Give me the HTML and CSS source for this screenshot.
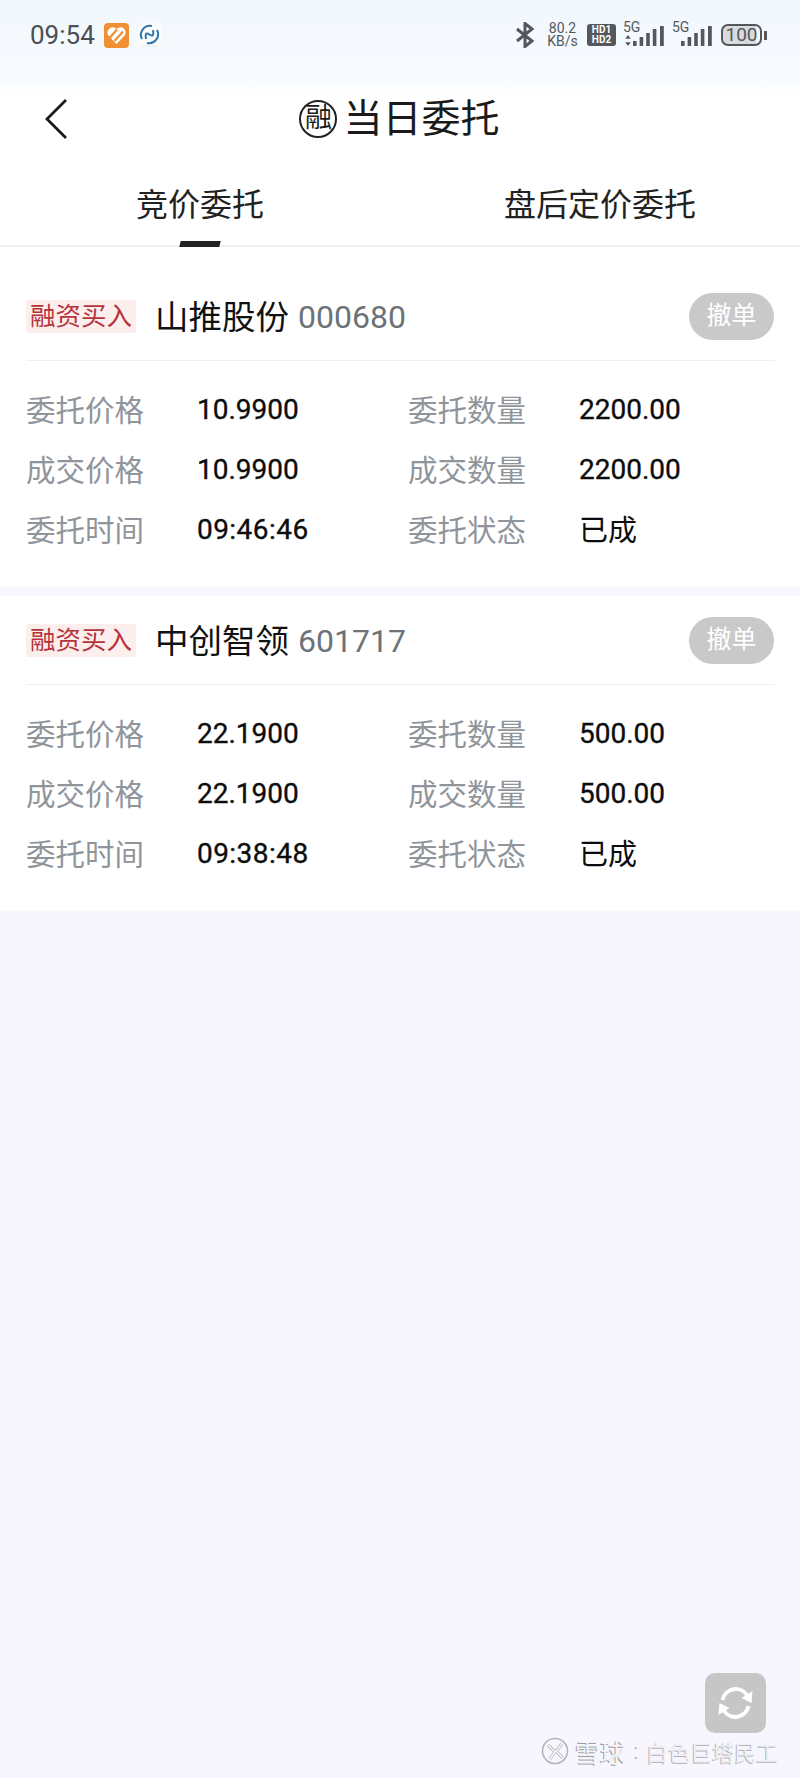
FILE: index.html
```html
<!DOCTYPE html>
<html lang="zh-CN">
<head>
<meta charset="utf-8">
<title>当日委托</title>
<link rel="stylesheet" href="styles.css">
</head>
<body>
<div class="page">
  <header class="top">
    <div class="status">
      <div class="status-left">
        <span class="clock">09:54</span>
        <svg class="app-icon" viewBox="0 0 25 25"><rect width="25" height="25" rx="4" fill="#f08f34"/><path d="M12.5 21 L4 12 Q2 7 7 4.500 Q10.500 3.500 12.500 6 Q15 3.500 18.500 4.500 Q23 7 21 12 Z" fill="#fff"/><path d="M6 14.500 L13 6.500 M10.500 18 L19 8.500" stroke="#f08f34" stroke-width="2.200" fill="none"/></svg>
        <svg class="app-icon light" viewBox="0 0 23 24"><rect width="23" height="24" rx="4" fill="#fbfcfe"/><rect x="3" y="22.500" width="17" height="1" fill="#dfe3e8"/><path d="M4 16 A9 9 0 0 1 14 3 M19 7 A9 9 0 0 1 9 20" fill="none" stroke="#2f76ad" stroke-width="2"/><path d="M8 16 Q6.500 8 11.500 11.500 Q16.500 15 15 7" fill="none" stroke="#2f76ad" stroke-width="2"/></svg>
      </div>
      <div class="status-right">
        <svg class="bt" viewBox="0 0 20 26"><path d="M2 7 L17 19 L10 24.500 V1.500 L17 7 L2 19" fill="none" stroke="#54585d" stroke-width="3"/></svg>
        <div class="speed"><span>80.2</span><span>KB/s</span></div>
        <div class="hd"><span>HD1</span><span>HD2</span></div>
        <div class="sig first">
          <span class="five-g">5G</span>
          <svg class="arrows" viewBox="0 0 6 12"><path d="M3 0 L6 4 H0 Z M3 12 L0 8 H6 Z" fill="#54585d"/></svg>
          <svg class="bars" viewBox="0 0 32 20"><g fill="#54585d"><rect x="0" y="15" width="3.600" height="5"/><rect x="6.600" y="11" width="3.600" height="9"/><rect x="13.200" y="7" width="3.600" height="13"/><rect x="19.800" y="3" width="3.600" height="17"/><rect x="27" y="0" width="3.800" height="20"/></g></svg>
        </div>
        <div class="sig">
          <span class="five-g">5G</span>
          <svg class="bars" viewBox="0 0 32 20"><g fill="#54585d"><rect x="0" y="15" width="3.600" height="5"/><rect x="6.600" y="11" width="3.600" height="9"/><rect x="13.200" y="7" width="3.600" height="13"/><rect x="19.800" y="3" width="3.600" height="17"/><rect x="27" y="0" width="3.800" height="20"/></g></svg>
        </div>
        <div class="battery"><div class="battery-body">100</div><i class="battery-cap"></i></div>
      </div>
    </div>
    <nav class="nav">
      <svg class="back" viewBox="0 0 24 42"><path d="M22 2 L3 21 L22 40" fill="none" stroke="#1a1a1a" stroke-width="2.800"/></svg>
      <h1 class="title"><span class="seal">融</span>当日委托</h1>
    </nav>
  </header>

  <div class="tabs">
    <div class="tab active">竞价委托</div>
    <div class="tab">盘后定价委托</div>
  </div>

  <div class="list">
    <section class="card">
      <div class="card-head">
        <span class="tag">融资买入</span>
        <span class="name">山推股份</span>
        <span class="code">000680</span>
        <span class="cancel">撤单</span>
      </div>
      <div class="grid">
        <span class="label">委托价格</span><span class="value">10.9900</span>
        <span class="label">委托数量</span><span class="value">2200.00</span>
        <span class="label">成交价格</span><span class="value">10.9900</span>
        <span class="label">成交数量</span><span class="value">2200.00</span>
        <span class="label">委托时间</span><span class="value time">09:46:46</span>
        <span class="label">委托状态</span><span class="value-text">已成</span>
      </div>
    </section>
    <section class="card">
      <div class="card-head">
        <span class="tag">融资买入</span>
        <span class="name">中创智领</span>
        <span class="code">601717</span>
        <span class="cancel">撤单</span>
      </div>
      <div class="grid">
        <span class="label">委托价格</span><span class="value">22.1900</span>
        <span class="label">委托数量</span><span class="value">500.00</span>
        <span class="label">成交价格</span><span class="value">22.1900</span>
        <span class="label">成交数量</span><span class="value">500.00</span>
        <span class="label">委托时间</span><span class="value time">09:38:48</span>
        <span class="label">委托状态</span><span class="value-text">已成</span>
      </div>
    </section>
  </div>

  <button class="refresh" type="button" aria-label="刷新">
    <svg viewBox="0 0 40 40"><g fill="none" stroke="#fff" stroke-width="4"><path d="M7 17 A13.500 13.500 0 0 1 32 13"/><path d="M33 23 A13.500 13.500 0 0 1 8 27"/></g><path d="M37 8 L36 20 L26 15 Z M3 32 L4 20 L14 25 Z" fill="#fff"/></svg>
  </button>

  <div class="watermark">
    <svg class="wm-logo" viewBox="0 0 28 28"><circle cx="14" cy="14" r="12.500" fill="#f7f6fe" stroke="#b4b4ba" stroke-width="1.600"/><path d="M7 8 L14 15 L9 22 M21 7 L15 14 L22 21" fill="none" stroke="#aeaeb4" stroke-width="3"/><path d="M7 8 L14 15 L9 22 M21 7 L15 14 L22 21" fill="none" stroke="#fff" stroke-width="1.400"/></svg>
    <span class="wm-brand">雪球</span><span class="wm-sep">:</span><span class="wm-user">白色巨塔民工</span>
  </div>
</div>
</body>
</html>
```

FILE: styles.css
```css
* { box-sizing: border-box; }
html, body { margin: 0; padding: 0; }
body {
  width: 800px;
  height: 1778px;
  overflow: hidden;
  background: #f7f6fe;
  font-family: Roboto, "Noto Sans CJK SC", sans-serif;
}
.page { position: relative; width: 800px; height: 1778px; }

.top { background: linear-gradient(#f1f7fd 0, #f8fbff 80px, #fff 94px); }
.status {
  height: 70px;
  display: flex;
  justify-content: space-between;
  align-items: center;
  padding: 0 33px 0 30px;
}
.status-left, .status-right { display: flex; align-items: center; }
.clock { font-size: 26px; color: #4b5056; margin-right: 9px; }
.app-icon { width: 25px; height: 25px; margin-right: 9px; }
.app-icon.light { width: 23px; height: 24px; }
.bt { width: 20px; height: 26px; margin-right: 13px; }
.speed {
  display: flex;
  flex-direction: column;
  align-items: center;
  width: 29px;
  font-size: 14px;
  line-height: 13px;
  color: #54585d;
  margin-right: 10px;
}
.hd {
  width: 29px;
  height: 22px;
  background: #54585d;
  border-radius: 3px;
  color: #fff;
  font-size: 10px;
  line-height: 10.5px;
  font-weight: 700;
  display: flex;
  flex-direction: column;
  align-items: center;
  justify-content: center;
  margin-right: 7px;
}
.sig { position: relative; width: 32px; height: 24px; margin-right: 8px; }
.sig.first { width: 42px; padding-left: 10px; margin-right: 16px; }
.five-g {
  position: absolute;
  left: -9px;
  top: -3px;
  font-size: 14px;
  line-height: 15px;
  color: #54585d;
}
.sig.first .five-g { left: 0; }
.arrows { position: absolute; left: 2px; top: 12px; width: 6px; height: 11px; }
.bars { display: block; width: 32px; height: 20px; margin-top: 3px; }
.battery { display: flex; align-items: center; }
.battery-body {
  width: 41px;
  height: 22px;
  border: 2px solid #54585d;
  border-radius: 7px;
  background: linear-gradient(90deg, #d8dadd 88%, transparent 88%);
  font-size: 19px;
  line-height: 18px;
  text-align: center;
  color: #54585d;
}
.battery-cap { width: 3px; height: 9px; background: #54585d; margin-left: 2px; }

.nav {
  position: relative;
  height: 96px;
  padding-top: 1px;
  display: flex;
  justify-content: center;
  align-items: center;
}
.back { position: absolute; left: 44px; top: 28px; width: 24px; height: 42px; }
.title {
  margin: 0 0 0 -1px;
  display: flex;
  align-items: center;
  font-size: 39px;
  font-weight: 400;
  color: #1a1a1a;
  line-height: 44px;
}
.seal {
  width: 38px;
  height: 38px;
  border: 2px solid #222;
  border-radius: 50%;
  font-size: 27px;
  line-height: 33px;
  text-align: center;
  margin-right: 6px;
}

.tabs {
  display: grid;
  grid-template-columns: 1fr 1fr;
  height: 81px;
  background: #fff;
  border-bottom: 2px solid #f0f0f2;
}
.tab {
  position: relative;
  text-align: center;
  font-size: 32px;
  line-height: 78px;
  color: #222;
}
.tab.active::after {
  content: "";
  position: absolute;
  left: 180px;
  bottom: -2px;
  width: 40px;
  height: 6px;
  background: #222;
  transform: skewX(-14deg);
}

.list { padding-top: 25px; background: #fff; }
.card { background: #fff; padding: 0 25px 0 26px; }
.card + .card { margin-top: 9px; box-shadow: 0 -9px 0 #f7f6fe; }
.card-head {
  height: 89px;
  display: flex;
  align-items: center;
  border-bottom: 1px solid #f0f0f2;
  padding-right: 1px;
}
.tag {
  width: 110px;
  height: 33px;
  background: #fdeeee;
  border-radius: 2px;
  color: #b5343c;
  font-size: 25.5px;
  line-height: 33px;
  text-align: center;
  margin-right: 19px;
}
.name { font-size: 33.5px; color: #111; margin-right: 9px; padding-bottom: 4px; }
.code { font-size: 32px; color: #6b7278; padding-top: 1px; }
.cancel {
  margin-left: auto;
  width: 85px;
  height: 47px;
  border-radius: 24px;
  background: #c9c9c9;
  color: #fff;
  font-size: 25px;
  line-height: 46px;
  text-align: center;
}
.grid {
  display: grid;
  grid-template-columns: 171px 211px 171px 1fr;
  grid-auto-rows: 60px;
  align-items: center;
  padding: 18px 0 28px;
}
.label { font-size: 29.5px; color: #90959b; padding-bottom: 3px; }
.value { font-size: 28px; font-weight: 400; color: #0d0d0d; -webkit-text-stroke: 0.35px #0d0d0d; }
.value.time { letter-spacing: 0.45px; }
.value-text { font-size: 29px; font-weight: 400; color: #0d0d0d; padding-bottom: 2px; }

.refresh {
  position: absolute;
  left: 705px;
  top: 1673px;
  width: 61px;
  height: 60px;
  padding: 10px;
  border: 0;
  border-radius: 10px;
  background: #c6c6c6;
}
.refresh svg { display: block; width: 41px; height: 40px; }

.watermark {
  position: absolute;
  left: 541px;
  top: 1736px;
  display: flex;
  align-items: center;
  height: 30px;
  color: #f4f4f8;
  font-size: 22px;
  text-shadow: -1px 1px 0 #9c9ca2;
}
.wm-logo { width: 28px; height: 28px; margin-right: 6px; }
.wm-brand { font-size: 25px; }
.wm-sep { margin: 0 8px 0 8px; color: #c0c0c6; text-shadow: none; }
.wm-user { color: #f0f0f4; text-shadow: -1px 1px 0 #b4b4ba; }
```
